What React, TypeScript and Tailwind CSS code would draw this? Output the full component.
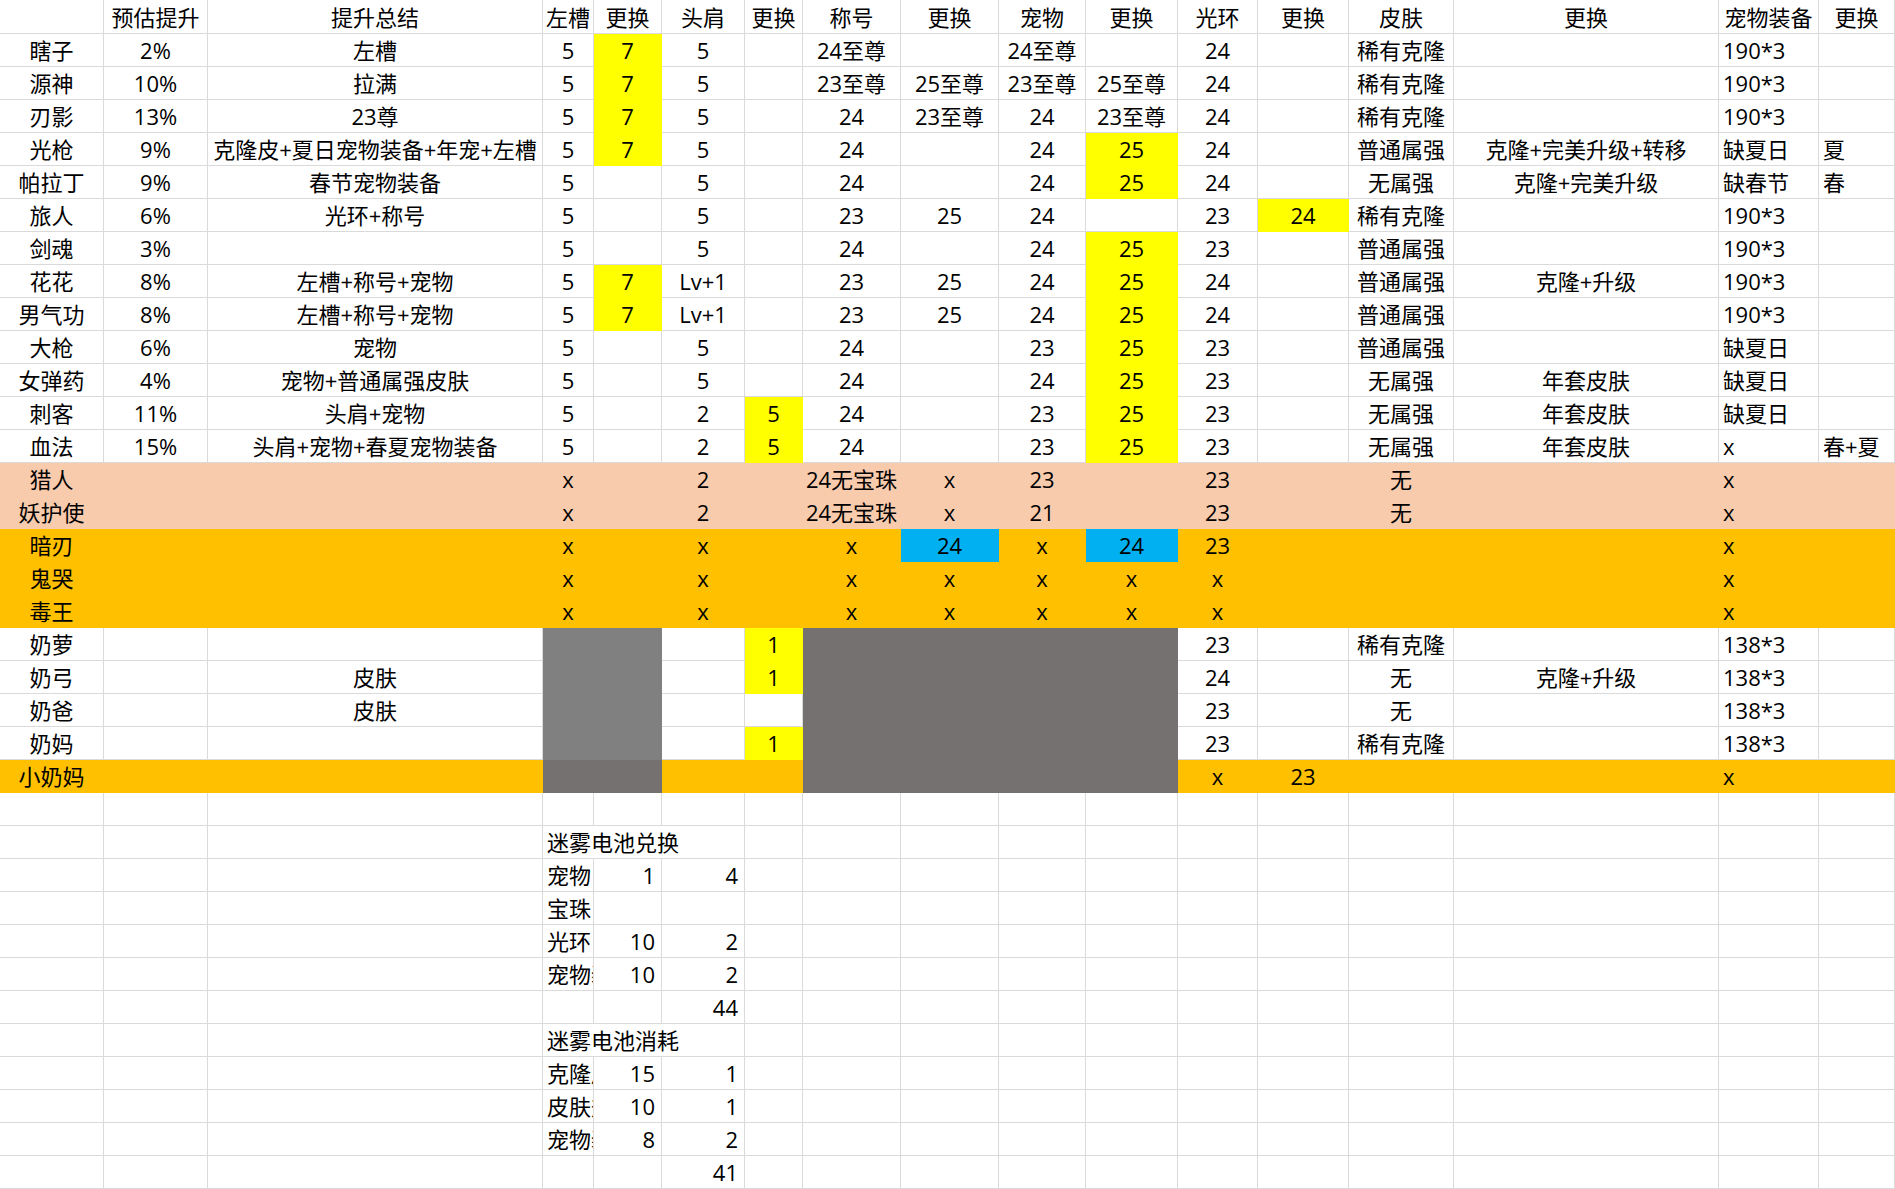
import React from 'react';

type Fill = 'y' | 'p' | 'o' | 'b' | 'g' | 'd';
type Align = 'c' | 'l' | 'r';

const fillClass: Record<Fill, string> = {
  y: 'bg-[#ffff00] border-[#ffff00]',
  p: 'bg-[#f8cbad] border-[#f8cbad]',
  o: 'bg-[#ffc000] border-[#ffc000]',
  b: 'bg-[#00b0f0] border-[#00b0f0]',
  g: 'bg-[#808080] border-[#808080]',
  d: 'bg-[#767171] border-[#767171]',
};

const alignClass: Record<Align, string> = {
  c: 'justify-center',
  l: 'justify-start pl-[4px]',
  r: 'justify-end pr-[6px]',
};

const gridCols =
  'grid grid-cols-[104px_104px_335px_51px_68px_83px_58px_98px_98px_87px_92px_80px_91px_105px_265px_100px_76px]';

type Row = {
  c: string[];
  f?: Fill;
  o?: Record<number, Fill>;
};

const header = ['', '预估提升', '提升总结', '左槽', '更换', '头肩', '更换', '称号', '更换', '宠物', '更换', '光环', '更换', '皮肤', '更换', '宠物装备', '更换'];

const nurse: Record<number, Fill> = { 3: 'g', 4: 'g', 6: 'y', 7: 'd', 8: 'd', 9: 'd', 10: 'd' };
const nurseNoY: Record<number, Fill> = { 3: 'g', 4: 'g', 7: 'd', 8: 'd', 9: 'd', 10: 'd' };

const rows: Row[] = [
  { c: ['瞎子', '2%', '左槽', '5', '7', '5', '', '24至尊', '', '24至尊', '', '24', '', '稀有克隆', '', '190*3', ''], o: { 4: 'y' } },
  { c: ['源神', '10%', '拉满', '5', '7', '5', '', '23至尊', '25至尊', '23至尊', '25至尊', '24', '', '稀有克隆', '', '190*3', ''], o: { 4: 'y' } },
  { c: ['刃影', '13%', '23尊', '5', '7', '5', '', '24', '23至尊', '24', '23至尊', '24', '', '稀有克隆', '', '190*3', ''], o: { 4: 'y' } },
  { c: ['光枪', '9%', '克隆皮+夏日宠物装备+年宠+左槽', '5', '7', '5', '', '24', '', '24', '25', '24', '', '普通属强', '克隆+完美升级+转移', '缺夏日', '夏'], o: { 4: 'y', 10: 'y' } },
  { c: ['帕拉丁', '9%', '春节宠物装备', '5', '', '5', '', '24', '', '24', '25', '24', '', '无属强', '克隆+完美升级', '缺春节', '春'], o: { 10: 'y' } },
  { c: ['旅人', '6%', '光环+称号', '5', '', '5', '', '23', '25', '24', '', '23', '24', '稀有克隆', '', '190*3', ''], o: { 12: 'y' } },
  { c: ['剑魂', '3%', '', '5', '', '5', '', '24', '', '24', '25', '23', '', '普通属强', '', '190*3', ''], o: { 10: 'y' } },
  { c: ['花花', '8%', '左槽+称号+宠物', '5', '7', 'Lv+1', '', '23', '25', '24', '25', '24', '', '普通属强', '克隆+升级', '190*3', ''], o: { 4: 'y', 10: 'y' } },
  { c: ['男气功', '8%', '左槽+称号+宠物', '5', '7', 'Lv+1', '', '23', '25', '24', '25', '24', '', '普通属强', '', '190*3', ''], o: { 4: 'y', 10: 'y' } },
  { c: ['大枪', '6%', '宠物', '5', '', '5', '', '24', '', '23', '25', '23', '', '普通属强', '', '缺夏日', ''], o: { 10: 'y' } },
  { c: ['女弹药', '4%', '宠物+普通属强皮肤', '5', '', '5', '', '24', '', '24', '25', '23', '', '无属强', '年套皮肤', '缺夏日', ''], o: { 10: 'y' } },
  { c: ['刺客', '11%', '头肩+宠物', '5', '', '2', '5', '24', '', '23', '25', '23', '', '无属强', '年套皮肤', '缺夏日', ''], o: { 6: 'y', 10: 'y' } },
  { c: ['血法', '15%', '头肩+宠物+春夏宠物装备', '5', '', '2', '5', '24', '', '23', '25', '23', '', '无属强', '年套皮肤', 'x', '春+夏'], o: { 6: 'y', 10: 'y' } },
  { c: ['猎人', '', '', 'x', '', '2', '', '24无宝珠', 'x', '23', '', '23', '', '无', '', 'x', ''], f: 'p' },
  { c: ['妖护使', '', '', 'x', '', '2', '', '24无宝珠', 'x', '21', '', '23', '', '无', '', 'x', ''], f: 'p' },
  { c: ['暗刃', '', '', 'x', '', 'x', '', 'x', '24', 'x', '24', '23', '', '', '', 'x', ''], f: 'o', o: { 8: 'b', 10: 'b' } },
  { c: ['鬼哭', '', '', 'x', '', 'x', '', 'x', 'x', 'x', 'x', 'x', '', '', '', 'x', ''], f: 'o' },
  { c: ['毒王', '', '', 'x', '', 'x', '', 'x', 'x', 'x', 'x', 'x', '', '', '', 'x', ''], f: 'o' },
  { c: ['奶萝', '', '', '', '', '', '1', '', '', '', '', '23', '', '稀有克隆', '', '138*3', ''], o: nurse },
  { c: ['奶弓', '', '皮肤', '', '', '', '1', '', '', '', '', '24', '', '无', '克隆+升级', '138*3', ''], o: nurse },
  { c: ['奶爸', '', '皮肤', '', '', '', '', '', '', '', '', '23', '', '无', '', '138*3', ''], o: nurseNoY },
  { c: ['奶妈', '', '', '', '', '', '1', '', '', '', '', '23', '', '稀有克隆', '', '138*3', ''], o: nurse },
  { c: ['小奶妈', '', '', '', '', '', '', '', '', '', '', 'x', '23', '', '', 'x', ''], f: 'o', o: { 3: 'd', 4: 'd', 7: 'd', 8: 'd', 9: 'd', 10: 'd' } },
];

// battery block in columns D..F (labels in D are clipped by the cell, like the sheet)
type Extra = { title?: string; d?: string; e?: string; f?: string };
const extras: Extra[] = [
  {},
  { title: '迷雾电池兑换' },
  { d: '宠物', e: '1', f: '4' },
  { d: '宝珠' },
  { d: '光环', e: '10', f: '2' },
  { d: '宠物装备', e: '10', f: '2' },
  { f: '44' },
  { title: '迷雾电池消耗' },
  { d: '克隆皮肤', e: '15', f: '1' },
  { d: '皮肤升级', e: '10', f: '1' },
  { d: '宠物装备', e: '8', f: '2' },
  { f: '41' },
];

const base = 'flex items-center overflow-hidden whitespace-nowrap border-r border-b';

function Cell({ text, fill, align = 'c', span }: { text: string; fill?: Fill; align?: Align; span?: boolean }) {
  return (
    <div className={`${base} ${fill ? fillClass[fill] : 'bg-white border-[#dadada]'} ${alignClass[align]} ${span ? 'col-span-3' : ''}`}>
      <span className="leading-none">{text}</span>
    </div>
  );
}

function alignFor(i: number): Align {
  return i === 15 || i === 16 ? 'l' : 'c';
}

export default function App() {
  return (
    <div
      className="w-[1895px] h-[1189px] overflow-hidden bg-white text-[22px] text-black"
      style={{ fontFamily: '"Open Sans", "Noto Sans CJK SC", sans-serif' }}
    >
      <div className={`${gridCols} h-[34px]`}>
        {header.map((h, i) => (
          <Cell key={i} text={h} />
        ))}
      </div>
      {rows.map((r, ri) => (
        <div key={ri} className={`${gridCols} h-[33px]`}>
          {r.c.map((t, i) => (
            <Cell key={i} text={t} fill={r.o?.[i] ?? r.f} align={alignFor(i)} />
          ))}
        </div>
      ))}
      {extras.map((x, ri) => (
        <div key={`x${ri}`} className={`${gridCols} h-[33px]`}>
          <Cell text="" />
          <Cell text="" />
          <Cell text="" />
          {x.title ? (
            <Cell text={x.title} align="l" span />
          ) : (
            <>
              <Cell text={x.d ?? ''} align="l" />
              <Cell text={x.e ?? ''} align="r" />
              <Cell text={x.f ?? ''} align="r" />
            </>
          )}
          {Array.from({ length: 11 }).map((_, i) => (
            <Cell key={i} text="" />
          ))}
        </div>
      ))}
    </div>
  );
}
